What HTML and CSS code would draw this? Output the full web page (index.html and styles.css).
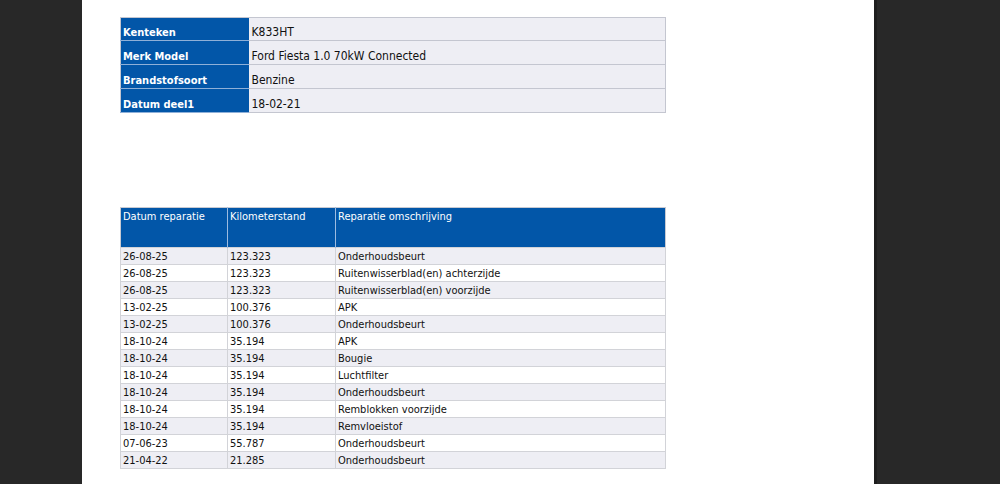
FILE: index.html
```html
<!DOCTYPE html>
<html>
<head>
<meta charset="utf-8">
<link rel="stylesheet" href="styles.css">
</head>
<body>
<div class="viewer">
  <div class="gutter-left"></div>
  <div class="page">
    <table class="info">
      <tr><th>Kenteken</th><td>K833HT</td></tr>
      <tr><th>Merk Model</th><td>Ford Fiesta 1.0 70kW Connected</td></tr>
      <tr><th>Brandstofsoort</th><td>Benzine</td></tr>
      <tr><th>Datum deel1</th><td>18-02-21</td></tr>
    </table>
    <table class="history">
      <thead>
        <tr><th class="c1">Datum reparatie</th><th class="c2">Kilometerstand</th><th>Reparatie omschrijving</th></tr>
      </thead>
      <tbody>
        <tr><td>26-08-25</td><td>123.323</td><td>Onderhoudsbeurt</td></tr>
        <tr><td>26-08-25</td><td>123.323</td><td>Ruitenwisserblad(en) achterzijde</td></tr>
        <tr><td>26-08-25</td><td>123.323</td><td>Ruitenwisserblad(en) voorzijde</td></tr>
        <tr><td>13-02-25</td><td>100.376</td><td>APK</td></tr>
        <tr><td>13-02-25</td><td>100.376</td><td>Onderhoudsbeurt</td></tr>
        <tr><td>18-10-24</td><td>35.194</td><td>APK</td></tr>
        <tr><td>18-10-24</td><td>35.194</td><td>Bougie</td></tr>
        <tr><td>18-10-24</td><td>35.194</td><td>Luchtfilter</td></tr>
        <tr><td>18-10-24</td><td>35.194</td><td>Onderhoudsbeurt</td></tr>
        <tr><td>18-10-24</td><td>35.194</td><td>Remblokken voorzijde</td></tr>
        <tr><td>18-10-24</td><td>35.194</td><td>Remvloeistof</td></tr>
        <tr><td>07-06-23</td><td>55.787</td><td>Onderhoudsbeurt</td></tr>
        <tr><td>21-04-22</td><td>21.285</td><td>Onderhoudsbeurt</td></tr>
      </tbody>
    </table>
  </div>
  <div class="gutter-right"></div>
</div>
</body>
</html>
```
FILE: styles.css
```css
html, body {
  margin: 0;
  padding: 0;
  background: #282828;
  height: 100%;
  overflow: hidden;
}
.viewer {
  display: flex;
  height: 484px;
}
.gutter-left {
  width: 82px;
  background: #282828;
}
.page {
  width: 792px;
  background: #ffffff;
  padding: 17px 0 0 38px;
  box-sizing: border-box;
  font-family: "DejaVu Sans", Verdana, sans-serif;
  font-stretch: condensed;
  color: #111;
}
.gutter-right {
  flex: 1;
  background: #282828;
  border-left: 3px solid #1e1e1e;
}
table {
  border-collapse: collapse;
  width: 546px;
  table-layout: fixed;
}
.info {
  border: 1px solid #c4c6d0;
}
.info th {
  width: 128px;
  background: #0256a8;
  color: #ffffff;
  font-weight: bold;
  font-size: 11px;
  text-align: left;
  vertical-align: bottom;
  padding: 0 2px 1px 2px;
  height: 24px;
  border-bottom: 1px solid #8fb0d8;
  box-sizing: border-box;
}
.info td {
  background: #eeeef4;
  font-size: 12px;
  padding: 0 3px 1px 3px;
  vertical-align: bottom;
  height: 24px;
  border-bottom: 1px solid #c4c6d0;
  box-sizing: border-box;
}
.info tr:first-child th,
.info tr:first-child td {
  height: 23px;
}
.history {
  margin-top: 94px;
  border: 1px solid #c8cad2;
}
.history th {
  background: #0256a8;
  color: #ffffff;
  font-weight: normal;
  font-size: 11px;
  text-align: left;
  vertical-align: top;
  height: 40px;
  padding: 2px 2px 0 2px;
  box-sizing: border-box;
  border-right: 1px solid #9dbbe0;
}
.history th:last-child {
  border-right: none;
}
.history th.c1 { width: 107px; }
.history th.c2 { width: 108px; }
.history td {
  font-size: 11px;
  height: 17px;
  padding: 0 2px;
  box-sizing: border-box;
  border: 1px solid #d2d3d8;
  white-space: nowrap;
  vertical-align: middle;
}
.history tbody tr:nth-child(odd) td {
  background: #eeeef4;
}
.history tbody tr:nth-child(even) td {
  background: #ffffff;
}
```
